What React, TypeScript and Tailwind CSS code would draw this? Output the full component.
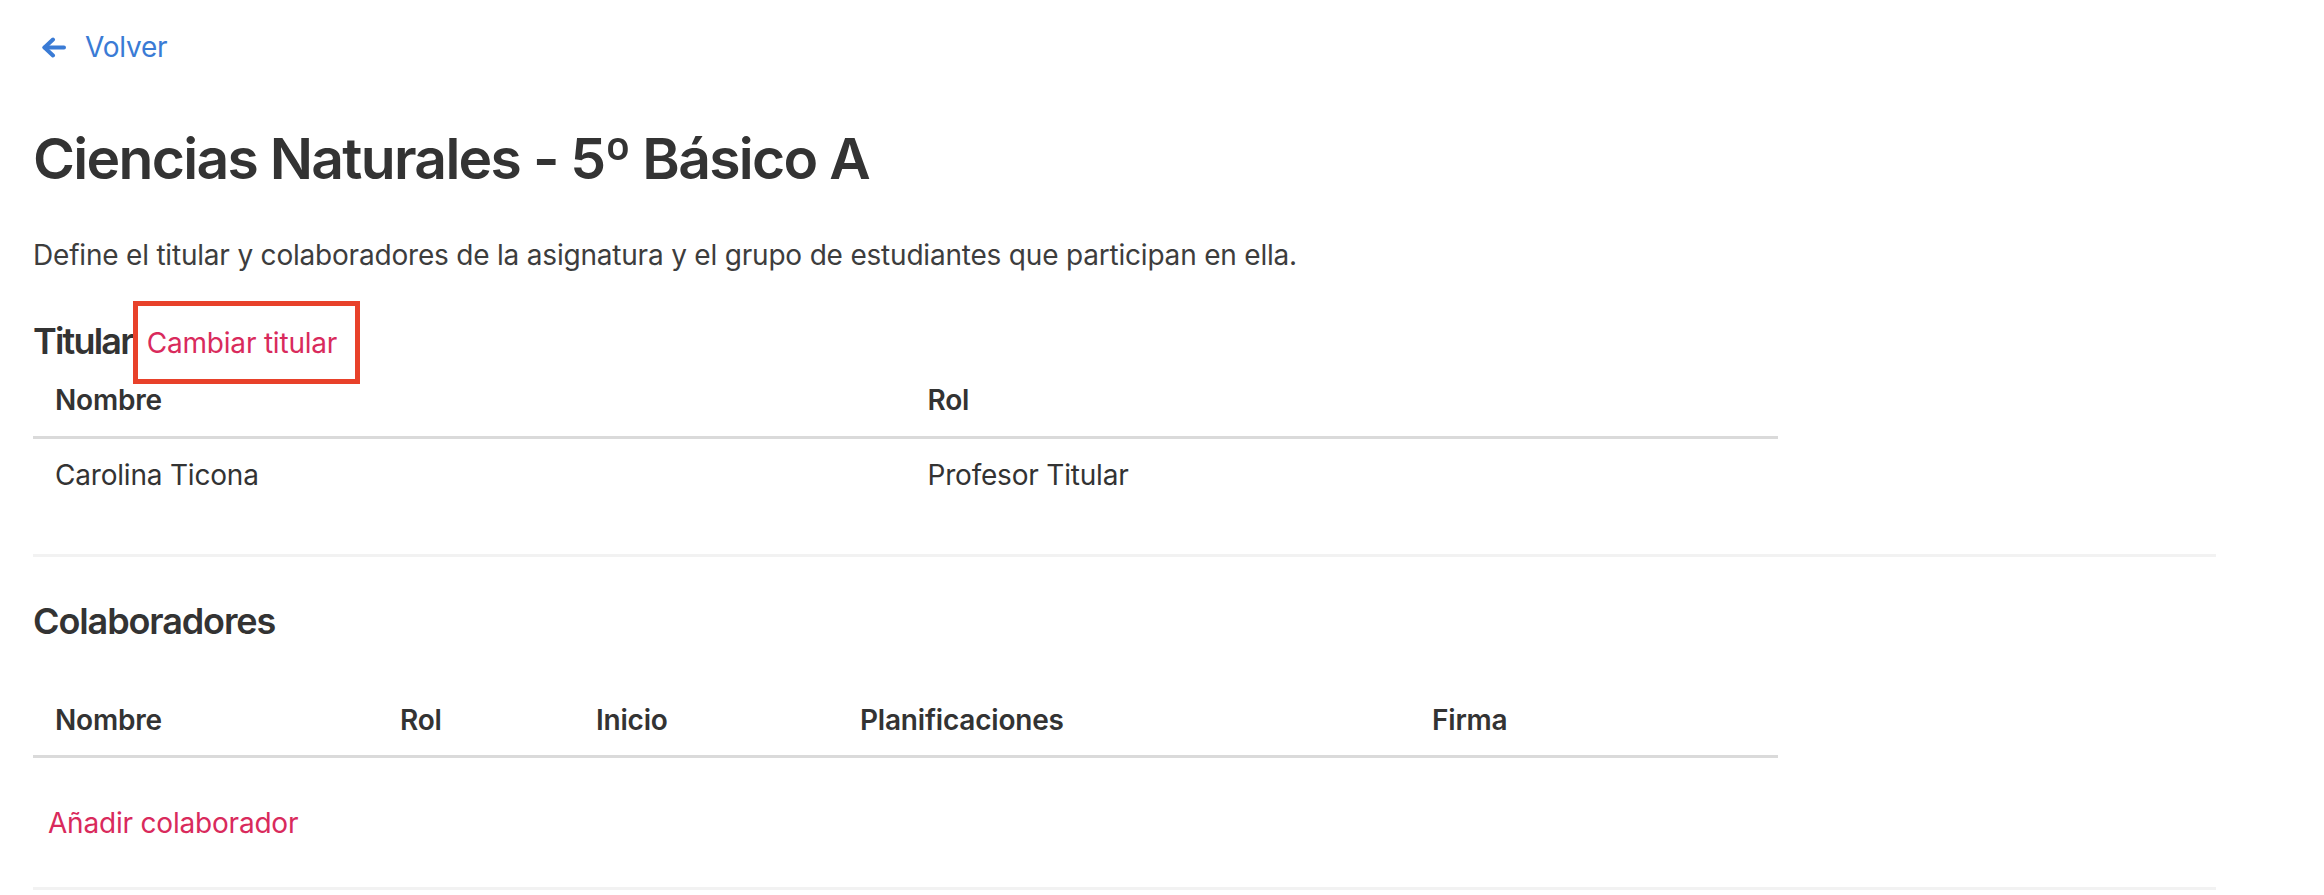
import React from "react"

function BackArrow() {
  return (
    <svg width="24" height="21" viewBox="0 0 24 21" fill="none" stroke="currentColor" strokeWidth="4" strokeLinecap="round" strokeLinejoin="round">
      <path d="M22 10.5H2.5" />
      <path d="M11 2.5 2.5 10.5 11 18.5" />
    </svg>
  )
}

export default function App() {
  return (
    <div className="min-h-screen bg-white font-['Inter',sans-serif] text-[#333333] tracking-[-0.2px]">
      <div className="pl-[33px]">
        {/* back link */}
        <div className="h-[94px] flex items-center">
          <a href="#" className="flex items-center gap-[19px] pl-[9px] text-[28px] text-[#3a7bd5]">
            <BackArrow />
            <span>Volver</span>
          </a>
        </div>

        <h1 className="h-[129px] flex items-center text-[57px] font-semibold tracking-[-1.7px]">
          Ciencias Naturales - 5º Básico A
        </h1>

        <p className="h-[64px] flex items-center text-[28px] text-[#3d3d3d]">
          Define el titular y colaboradores de la asignatura y el grupo de estudiantes que participan en ella.
        </p>

        {/* titular */}
        <div className="mt-[14px] h-[83px] flex items-center">
          <h2 className="text-[36px] font-semibold tracking-[-1.8px] pb-[4px]">Titular</h2>
          <button className="h-[83px] w-[227px] border-[5px] border-[#e8412a] flex items-center pl-[9px] text-[28px] text-[#d92a5c]">
            Cambiar titular
          </button>
        </div>

        <div className="w-[1745px] grid grid-cols-2">
          <div className="col-span-2 grid grid-cols-2 border-b-[3px] border-[#dadada]">
            <div className="h-[52px] pb-[20px] pl-[22px] flex items-center text-[28px] font-semibold">Nombre</div>
            <div className="h-[52px] pb-[20px] pl-[22px] flex items-center text-[28px] font-semibold">Rol</div>
          </div>
          <div className="h-[115px] pb-[43px] pl-[22px] flex items-center text-[28px] text-[#333333]">Carolina Ticona</div>
          <div className="h-[115px] pb-[43px] pl-[22px] flex items-center text-[28px] text-[#333333]">Profesor Titular</div>
        </div>

        <div className="w-[2183px] h-[3px] bg-[#f2f2f2]" />

        {/* colaboradores */}
        <h2 className="h-[127px] flex items-center text-[36px] font-semibold tracking-[-1.1px]">Colaboradores</h2>

        <div className="w-[1745px]">
          <div className="grid grid-cols-[345px_196px_264px_572px_368px] border-b-[3px] border-[#dadada]">
            {["Nombre", "Rol", "Inicio", "Planificaciones", "Firma"].map((h) => (
              <div key={h} className="h-[71px] pl-[22px] flex items-center text-[28px] font-semibold">
                {h}
              </div>
            ))}
          </div>
          <div className="h-[129px] pl-[15px] flex items-center">
            <button className="text-[28px] text-[#d92a5c]">Añadir colaborador</button>
          </div>
        </div>

        <div className="w-[2183px] h-[3px] bg-[#f2f2f2]" />
      </div>
    </div>
  )
}
